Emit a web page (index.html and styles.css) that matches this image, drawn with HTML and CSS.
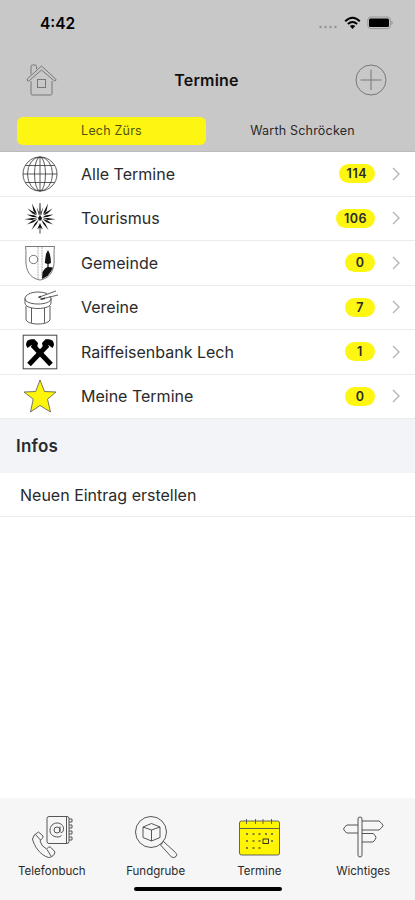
FILE: index.html
```html
<!DOCTYPE html>
<html lang="de">
<head>
    <meta charset="UTF-8">
    <meta name="viewport" content="width=device-width, initial-scale=1.0">
    <title>Termine</title>
    <link rel="stylesheet" href="styles.css">
</head>
<body>

    <header class="header">
        <div class="status-bar">
            <span class="time">4:42</span>
            <div class="status-icons">
                <svg class="signal" width="20" height="14" viewBox="0 0 20 14" fill="#929292">
                    <circle cx="2.5" cy="11" r="1.2"/><circle cx="7.5" cy="11" r="1.2"/><circle cx="12.5" cy="11" r="1.2"/><circle cx="17.5" cy="11" r="1.2"/>
                </svg>
                <svg class="wifi" width="17" height="14" viewBox="0 0 17 14" fill="none" stroke="#000" stroke-width="2">
                    <path d="M1.2 5.2 Q8.5 -1.8 15.8 5.2M3.9 8.1 Q8.5 3.8 13.1 8.1"/>
                    <path d="M5.8 10 Q8.5 7.9 11.2 10 L8.5 13Z" fill="#000" stroke="none"/>
                </svg>
                <svg class="battery" width="27" height="14" viewBox="0 0 27 14">
                    <rect x=".8" y="1" width="22.6" height="11.6" rx="3" fill="none" stroke="#999"/>
                    <rect x="2" y="2.6" width="20" height="8.5" rx="1.5"/>
                    <path d="M24.5 4.7 Q26.8 6.8 24.5 9Z" fill="#888"/>
                </svg>
            </div>
        </div>

        <div class="title-bar">
            <svg class="home" width="32" height="34" viewBox="0 0 32 34" fill="none" stroke="#777">
                <path d="M5 18V30.5Q5 32 6.5 32H24.5Q26 32 26 30.5V18"/>
                <path d="M15.5 3 1.2 16Q.5 18 2.8 18L15.5 7 28.5 18Q31 17.5 29.7 16Z"/>
                <path d="M5 11.5V3.5Q5 2 6.5 2H9Q10.5 2 10.5 3.5V6"/>
                <rect x="11.5" y="16.5" width="8" height="8"/>
            </svg>
            <h1>Termine</h1>
            <svg width="32" height="32" viewBox="0 0 32 32" fill="none" stroke="#777">
                <circle cx="16" cy="16" r="15"/>
                <path d="M16 5.5V26M5.5 16H26.5"/>
            </svg>
        </div>

        <div class="tabs">
            <div class="tab active">Lech Zürs</div>
            <div class="tab">Warth Schröcken</div>
        </div>
    </header>

    <main class="content">
        <ul class="list">
            <li class="row">
                <svg class="row-icon" viewBox="0 0 36 36" fill="none" stroke="#333" stroke-width=".8">
                    <circle cx="18" cy="18" r="17"/>
                    <ellipse cx="18" cy="18" rx="12.5" ry="17"/>
                    <ellipse cx="18" cy="18" rx="5.5" ry="17"/>
                    <path d="M18 1V35M1 18H35M3.5 9.5H32.5M3.5 26.5H32.5"/>
                </svg>
                <span class="label">Alle Termine</span>
                <span class="badge">114</span>
                <svg class="chevron" viewBox="0 0 8 14"><path d="M1 1 7 7 1 13"/></svg>
            </li>
            <li class="row">
                <svg class="row-icon" viewBox="0 0 36 36" fill="#111">
                    <path d="M17.6 3H18.4L18.7 14 18 16.5 17.3 14Z M14.6 7 16.9 12V15.5Z M21.4 7 19.1 12V15.5Z"/>
                    <path d="M10 3.5 14 11.5 15 15 11.5 11Z M5.5 8.5 12.5 12.5 14.5 15.5 10.5 13.5Z"/>
                    <path d="M26 3.5 22 11.5 21 15 24.5 11Z M30.5 8.5 23.5 12.5 21.5 15.5 25.5 13.5Z"/>
                    <path d="M4.5 14.5 12 15.3 16 17.5 10.5 17Z M2.5 19.3 10 18 15 18.5 10 20Z M5 24.5 10.5 20.5 15.5 19 11.5 22.2Z"/>
                    <path d="M31.5 14.5 24 15.3 20 17.5 25.5 17Z M33.5 19.3 26 18 21 18.5 26 20Z M31 24.5 25.5 20.5 20.5 19 24.5 22.2Z"/>
                    <path d="M9.5 30 12.8 23.5 16.8 19.5 14.6 24Z M26.5 30 23.2 23.5 19.2 19.5 21.4 24Z"/>
                    <path d="M18 23 20.8 29.5 18.4 27.5V33.5H17.6V27.5L15.2 29.5Z M16.5 17 18 15.5 19.5 17 20 19 18 21 16 19Z"/>
                </svg>
                <span class="label">Tourismus</span>
                <span class="badge">106</span>
                <svg class="chevron" viewBox="0 0 8 14"><path d="M1 1 7 7 1 13"/></svg>
            </li>
            <li class="row">
                <svg class="row-icon" viewBox="0 0 36 36" fill="none" stroke="#555" stroke-width=".8">
                    <path d="M3.5 1.5H32.5C31.5 7 32.5 12 32 19 31 29 25 34 18 35 11 34 5 29 4 19 3.5 12 4.5 7 3.5 1.5Z"/>
                    <path d="M16 2V34M20 2V33" stroke="#999" stroke-dasharray="2 .7"/>
                    <circle cx="11.5" cy="14.5" r="4.2"/>
                    <path d="M26 5 24 9 23.4 13 22.8 18 25.4 19V22L23 23.5 20.5 27 20 34 25.5 31 29 26.5 31 22.5 26.6 22V19L29 18 28.6 13 27.8 9Z" fill="#111" stroke="none"/>
                </svg>
                <span class="label">Gemeinde</span>
                <span class="badge">0</span>
                <svg class="chevron" viewBox="0 0 8 14"><path d="M1 1 7 7 1 13"/></svg>
            </li>
            <li class="row">
                <svg class="row-icon" viewBox="0 0 36 36" fill="none" stroke="#333" stroke-width=".8">
                    <path d="M27.5 7Q29 8 29 9.5C29 13 23 15 16 15S3 13 3 9.5 9 3 16 3Q21 3 25 4.5"/>
                    <path d="M3 9.5V14C3 17.5 9 19.5 16 19.5S29 17.5 29 14V9.5M4 17V30C4 33 9 35 16 35S28 33 28 30V17"/>
                    <path d="M9.5 19V33.8M22.5 19V33.8"/>
                    <path d="M17.5 8 34 2M19.5 10 36 6"/>
                    <path d="M18.5 10.3 23 9.2M16.5 8.4 19 7.5" stroke-width="1.6"/>
                </svg>
                <span class="label">Vereine</span>
                <span class="badge">7</span>
                <svg class="chevron" viewBox="0 0 8 14"><path d="M1 1 7 7 1 13"/></svg>
            </li>
            <li class="row">
                <svg class="row-icon" viewBox="0 0 36 36">
                    <rect x="1.2" y="1.2" width="33.6" height="33.6" fill="#fff" stroke="#444"/>
                    <path d="M7 30.5 25.5 11M29 30.5 10.5 11" stroke="#000" stroke-width="5"/>
                    <path d="M4 11Q4 5.5 9.5 5.2L12.5 5.2 16 9 15 14 11 15 9.5 11 5.5 14Z"/>
                    <path d="M32 11Q32 5.5 26.5 5.2L23.5 5.2 20 9 21 14 25 15 26.5 11 30.5 14Z"/>
                </svg>
                <span class="label">Raiffeisenbank Lech</span>
                <span class="badge">1</span>
                <svg class="chevron" viewBox="0 0 8 14"><path d="M1 1 7 7 1 13"/></svg>
            </li>
            <li class="row">
                <svg class="row-icon" viewBox="0 0 36 36">
                    <path d="M18 2 22.5 13.5 34 14 25.5 21.2 28.5 34 18 27.5 8.5 34 11.2 21.2 2 14 13.7 13.5Z" fill="#fdf50a" stroke="#555" stroke-width=".8"/>
                </svg>
                <span class="label">Meine Termine</span>
                <span class="badge">0</span>
                <svg class="chevron" viewBox="0 0 8 14"><path d="M1 1 7 7 1 13"/></svg>
            </li>
        </ul>

        <h2>Infos</h2>
        <div class="new-entry">Neuen Eintrag erstellen</div>
    </main>

    <footer class="footer">
        <nav class="nav">
            <div class="nav-item">
                <svg class="nav-icon" viewBox="0 0 44 44" fill="none" stroke="#444" stroke-width=".9">
                    <rect x="17" y="1.5" width="22" height="27" rx="2"/>
                    <path d="M36.5 2V28M39 4H42V7H39M39 10H42V13H39M39 16H42V19H39M39 22H42V25H39"/>
                    <circle cx="27" cy="15" r="3"/>
                    <path d="M30 11.5V16.5Q31 19 33 16.5C35 11 31 8 27 8S20 11 20 15.5 24 22 28 22Q30 22 31.5 20.5"/>
                    <path d="M8.5 17 13 21Q13.5 23 11.5 24L10 26Q11.5 31.5 16.5 34L18.5 32.3Q20 31 21.5 33L25 37Q24 42 18.5 42.5C10.5 40.5 4 31 2.5 24Q3 19.5 8.5 17Z"/>
                    <path d="M5.5 19.5 10.5 25M17 34.5 21 41"/>
                </svg>
                <span>Telefonbuch</span>
            </div>
            <div class="nav-item">
                <svg class="nav-icon" viewBox="0 0 44 44" fill="none" stroke="#444" stroke-width=".9">
                    <circle cx="17" cy="17" r="15.5"/>
                    <path d="M26.5 30 37.5 42Q40 43.5 42 41.5T41.5 37.5L29.5 26.5Z"/>
                    <path d="M9 12 17.5 8.5 26 12V22.5L17.5 26 9 22.5ZM9 12 17.5 15 26 12M17.5 15V26"/>
                </svg>
                <span>Fundgrube</span>
            </div>
            <div class="nav-item">
                <svg class="nav-icon" viewBox="0 0 44 44" fill="none" stroke="#555" stroke-width=".9">
                    <rect x="2.5" y="6" width="40" height="34" rx="2" fill="#fff500"/>
                    <path d="M2.5 13.5H42.5M9.5 4V9M18.5 4V9M26 4V9M34.5 4V9"/>
                    <path d="M9 19H11M15.5 19H17.5M21.5 19H23.5M28 19H30M34 19H36M9 26H11M15.5 26H17.5M21.5 26H23.5M34 26H36M9 33H11M15.5 33H17.5M21.5 33H23.5" stroke-width="1.4"/>
                    <rect x="26" y="24" width="5.5" height="4.5" stroke="#222"/>
                </svg>
                <span>Termine</span>
            </div>
            <div class="nav-item">
                <svg class="nav-icon" viewBox="0 0 44 44" fill="#f6f6f6" stroke="#444" stroke-width=".9">
                    <path d="M20 6H38Q41 8 42 10.5 41 13 38 15H20ZM20 10H6Q3.5 11.5 2.5 14 3.5 16.5 6 18H20ZM20 18.5H32Q34.5 20 35 22.5 34.5 25 32 27H20Z"/>
                    <rect x="17" y="2" width="4" height="40" rx="2"/>
                </svg>
                <span>Wichtiges</span>
            </div>
        </nav>
        <div class="home-indicator"></div>
    </footer>

</body>
</html>
```

FILE: styles.css
```css
* {
    box-sizing: border-box;
}
body {
    font-family: Inter, "Liberation Sans", sans-serif;
    margin: 0;
    height: 900px;
    display: flex;
    flex-direction: column;
    background: #fff;
    color: #2a2a2a;
}
svg {
    display: block;
    flex: none;
}
.header {
    height: 152px;
    background: #c8c8c8;
    border-bottom: 1px solid #bbb;
}
.status-bar {
    height: 46px;
    padding: 0 21px 0 40px;
    display: flex;
    align-items: center;
    justify-content: space-between;
}
.time {
    font-size: 15.5px;
    font-weight: 600;
    color: #000;
}
.status-icons {
    display: flex;
    gap: 6px;
}
.title-bar {
    height: 67px;
    padding: 0 28px 0 26px;
    display: flex;
    align-items: center;
    justify-content: space-between;
}
h1 {
    margin: 0;
    font-size: 16px;
    font-weight: 600;
    letter-spacing: 0.2px;
    color: #111;
}
.tabs {
    display: flex;
    padding: 4px 16px 0 17px;
}
.tab {
    flex: 1;
    height: 28px;
    line-height: 27px;
    text-align: center;
    font-size: 12.5px;
    letter-spacing: 0.2px;
    border-radius: 6px;
}
.tab.active {
    flex: none;
    width: 189px;
    background: #fdf512;
    color: #55520a;
}
.content {
    flex: 1;
}
.list {
    list-style: none;
    margin: 0;
    padding: 0;
}
.row {
    height: 44.5px;
    padding: 0 15px 0 22px;
    display: flex;
    align-items: center;
    border-bottom: 1px solid #ebebeb;
}
.row-icon {
    width: 36px;
    height: 36px;
    margin-right: 23px;
}
.label {
    flex: 1;
    font-size: 16px;
}
.badge {
    min-width: 30px;
    height: 19px;
    line-height: 19px;
    padding: 0 8px;
    border-radius: 10px;
    background: #fdf512;
    font-size: 12.5px;
    font-weight: 600;
    letter-spacing: 0.5px;
    text-align: center;
}
.chevron {
    width: 8px;
    height: 14px;
    margin-left: 17px;
    fill: none;
    stroke: #b5b5b5;
    stroke-width: 1.4;
}
h2 {
    margin: 0;
    height: 54px;
    line-height: 54px;
    padding-left: 16px;
    background: #f2f4f8;
    font-size: 17px;
    font-weight: 600;
    letter-spacing: 0.2px;
}
.new-entry {
    height: 44px;
    line-height: 45px;
    padding-left: 20px;
    border-bottom: 1px solid #ebebeb;
    font-size: 16px;
}
.footer {
    height: 102px;
    padding-top: 17px;
    background: #f6f6f6;
}
.nav {
    display: flex;
    height: 73px;
}
.nav-item {
    flex: 1;
    display: flex;
    flex-direction: column;
    align-items: center;
    font-size: 11.5px;
    line-height: 14px;
}
.nav-icon {
    width: 44px;
    height: 44px;
    margin-bottom: 5px;
}
.home-indicator {
    width: 148px;
    height: 4px;
    margin: -1px auto 0;
    border-radius: 2px;
    background: #000;
}
```
